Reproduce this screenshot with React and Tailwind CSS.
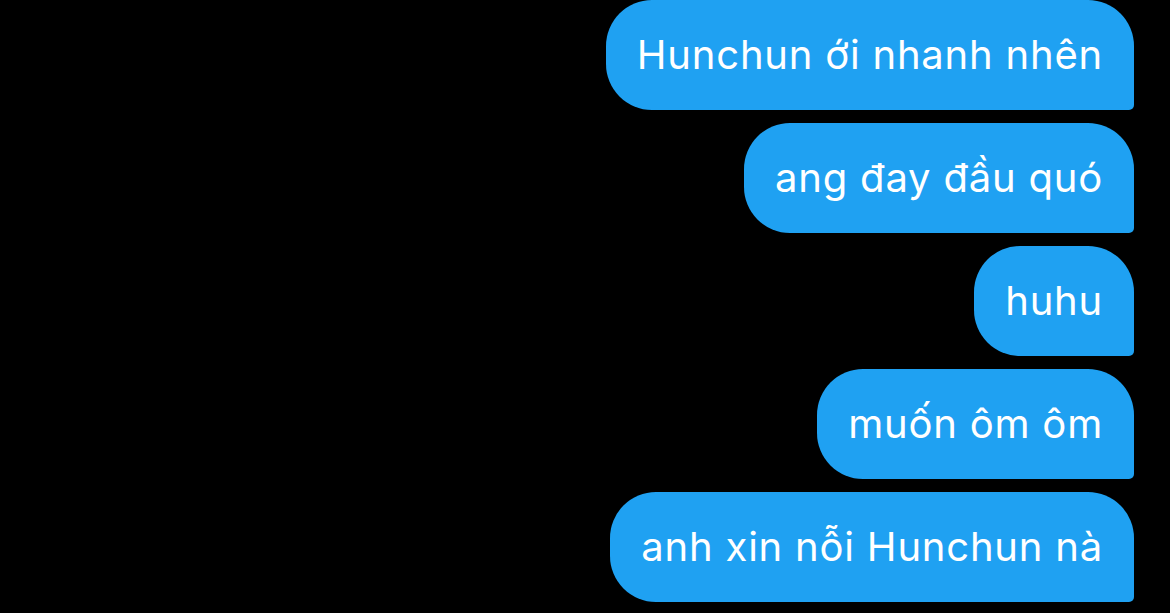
const messages = [
  'Hunchun ới nhanh nhên',
  'ang đay đầu quó',
  'huhu',
  'muốn ôm ôm',
  'anh xin nỗi Hunchun nà',
];

const App = () => {
  return (
    <div className="w-[1170px] h-[613px] bg-black overflow-hidden">
      <div className="flex flex-col items-end gap-[13px] pr-[36px]">
        {messages.map((text) => (
          <div
            key={text}
            className="h-[110px] flex items-center pl-[31px] pr-[31px] bg-[#1fa1f2] text-white rounded-[46px] rounded-br-[5px] text-[40px] leading-none tracking-[0.8px] whitespace-nowrap"
            style={{ fontFamily: 'Inter, "Noto Sans", sans-serif' }}
          >
            {text}
          </div>
        ))}
      </div>
    </div>
  );
};

export default App;
